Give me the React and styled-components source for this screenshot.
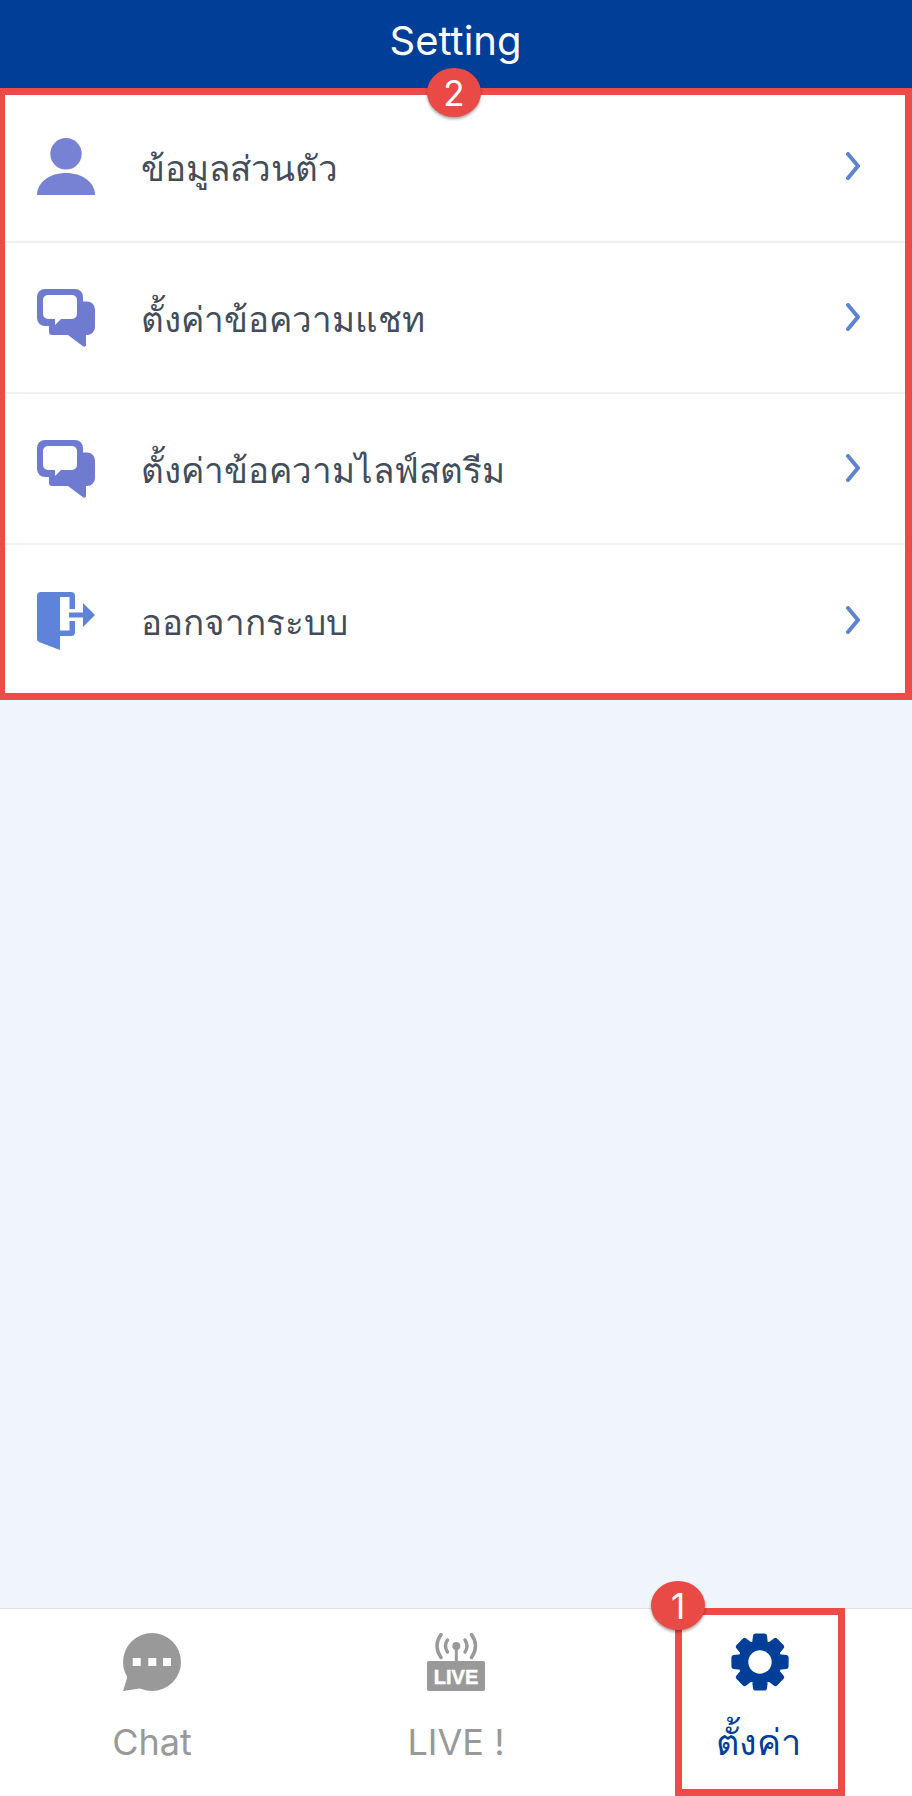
import React from "react";
import styled, { createGlobalStyle } from "styled-components";

const UI_FONT = `Inter, "Noto Sans", "Liberation Sans", "DejaVu Sans", sans-serif`;

const Global = createGlobalStyle`
  html, body { margin: 0; padding: 0; background: #f0f4fc; }
  * { box-sizing: border-box; }
`;

const Page = styled.div`
  position: relative;
  display: flex;
  flex-direction: column;
  width: 912px;
  height: 1796px;
  overflow: hidden;
  background: #f0f4fc;
  font-family: ${UI_FONT};
`;

const Header = styled.header`
  display: flex;
  justify-content: center;
  align-items: center;
  height: 88px;
  padding-bottom: 8px;
  padding-right: 1px;
  background: #003e98;
  color: #fff;
  font-size: 40px;
`;

const List = styled.div`
  padding-top: 4px;
  background: #fff;
`;

const Row = styled.div`
  display: flex;
  align-items: center;
  height: 151px;
  padding: 0 52px 0 37px;
  border-bottom: ${(p) => (p.$last ? "0" : "2px solid #f0f1f5")};
`;

const RowLabel = styled.span`
  flex: 1;
  margin-left: 46px;
  padding-top: 4px;
  color: #434d5a;
  font-size: 35px;
`;

const Chevron = styled.svg`
  margin-bottom: 2px;
`;

const Spacer = styled.div`
  flex: 1;
`;

const TabBar = styled.nav`
  display: grid;
  grid-template-columns: repeat(3, 1fr);
  height: 188px;
  padding-top: 24px;
  background: #fff;
  border-top: 1px solid #dfe0e4;
`;

const Tab = styled.div`
  display: flex;
  flex-direction: column;
  align-items: center;
  gap: 31px;
  color: ${(p) => (p.$active ? "#003e98" : "#999")};
  font-size: 36px;
  line-height: 40px;
`;

const TabLabel = styled.span`
  margin-right: ${(p) => (p.$active ? "3px" : "0")};
`;

const Frame = styled.div`
  position: absolute;
  border: 7px solid #ec4b47;
  pointer-events: none;
`;

const ListFrame = styled(Frame)`
  top: 88px;
  left: -2px;
  right: 0;
  height: 612px;
`;

const TabFrame = styled(Frame)`
  top: 1608px;
  left: 675px;
  width: 170px;
  height: 188px;
`;

const Badge = styled.div`
  position: absolute;
  top: ${(p) => p.$top}px;
  left: ${(p) => p.$left}px;
  width: 54px;
  height: 49px;
  display: flex;
  align-items: center;
  justify-content: center;
  border-radius: 50%;
  background: #ea4a45;
  box-shadow: 0 2px 3px rgba(0, 0, 0, 0.35);
  color: #fff;
  font-size: 35px;
`;

const Icon = ({ children, color = "#7782d5" }) => (
  <svg width="58" height="58" viewBox="0 0 58 58" fill={color}>
    {children}
  </svg>
);

const PersonIcon = () => (
  <Icon>
    <circle cx="29" cy="15.800" r="15.700" />
    <path d="M0 57C0 44 13 35 29 35S58 44 58 57Z" />
  </Icon>
);

const ChatPairIcon = () => (
  <Icon color="#6f7ad1">
    <path d="M40 12.500h10a8 8 0 0 1 8 8v17.500a8 8 0 0 1-8 8h-1v10a1.800 1.800 0 0 1-3 1.300L31 46H15a3 3 0 0 1-3-3V30Z" />
    <rect width="46" height="37" rx="8" />
    <path d="M14 37h9l-5 5Z" />
    <path fill="#fff" d="M11 6H35a5 5 0 0 1 5 5V25a5 5 0 0 1-5 5H24L18 36V30H11a5 5 0 0 1-5-5V11A5 5 0 0 1 11 6Z" />
  </Icon>
);

const LogoutIcon = () => (
  <Icon color="#5f83d9">
    <path d="M4 0H23V58L2 50Q0 49 0 47V4A4 4 0 0 1 4 0Z" />
    <path d="M23 0H34a4 4 0 0 1 4 4V17H32.500V5H23ZM32.500 29H38V40a4 4 0 0 1-4 4H23V38.500h9.500Z" />
    <path d="M32 20.500H46V11L58 23 46 35V25.500H32Z" />
  </Icon>
);

const ChevronIcon = () => (
  <Chevron width="14" height="28" viewBox="0 0 14 28" fill="none">
    <path d="M2 2L12 14L2 26" stroke="#5f83d0" strokeWidth="4" strokeLinecap="round" strokeLinejoin="round" />
  </Chevron>
);

const ChatIcon = () => (
  <Icon color="#999">
    <circle cx="29" cy="29" r="29" />
    <path d="M0 58L5 42 20 55Z" />
    <g fill="#fff">
      <rect x="9.700" y="25" width="8" height="8" />
      <rect x="25.300" y="25" width="8" height="8" />
      <rect x="40" y="25" width="8" height="8" />
    </g>
  </Icon>
);

const LiveIcon = () => (
  <Icon color="#999">
    <circle cx="29.300" cy="13" r="4" />
    <rect x="27.800" y="13" width="3" height="16" />
    <g fill="none" stroke="#999" strokeWidth="3.500" strokeLinecap="round">
      <path d="M14 1.500Q6 13 14 24.500" />
      <path d="M20.500 7Q16.500 13 20.500 19" />
      <path d="M44.500 1.500Q52.500 13 44.500 24.500" />
      <path d="M38 7Q42 13 38 19" />
    </g>
    <rect y="28" width="58" height="30" rx="2" />
    <text x="29" y="51" fill="#fff" stroke="#fff" strokeWidth="0.500" fontFamily="Liberation Sans, sans-serif" fontSize="20" fontWeight="700" textAnchor="middle">
      LIVE
    </text>
  </Icon>
);

// 8 tooth cog, worked out once instead of typing all the points
const cogPoints = (() => {
  const pts = [];
  for (let i = 0; i < 8; i++) {
    const a = (i * Math.PI) / 4 - Math.PI / 2;
    [
      [19.5, -0.28],
      [26.5, -0.17],
      [26.5, 0.17],
      [19.5, 0.28],
    ].forEach(([r, d]) => {
      pts.push(`${(29 + r * Math.cos(a + d)).toFixed(2)},${(29 + r * Math.sin(a + d)).toFixed(2)}`);
    });
  }
  return pts.join(" ");
})();

const CogIcon = () => (
  <Icon color="#003e98">
    <polygon points={cogPoints} stroke="#003e98" strokeWidth="5" strokeLinejoin="round" />
    <circle cx="29" cy="29" r="11.700" fill="#fff" />
  </Icon>
);

const rows = [
  { icon: <PersonIcon />, label: "ข้อมูลส่วนตัว" },
  { icon: <ChatPairIcon />, label: "ตั้งค่าข้อความแชท" },
  { icon: <ChatPairIcon />, label: "ตั้งค่าข้อความไลฟ์สตรีม" },
  { icon: <LogoutIcon />, label: "ออกจากระบบ" },
];

const App = () => (
  <Page>
    <Global />
    <Header>Setting</Header>
    <List>
      {rows.map((row, i) => (
        <Row key={row.label} $last={i === rows.length - 1}>
          {row.icon}
          <RowLabel>{row.label}</RowLabel>
          <ChevronIcon />
        </Row>
      ))}
    </List>
    <Spacer />
    <TabBar>
      <Tab>
        <ChatIcon />
        <TabLabel>Chat</TabLabel>
      </Tab>
      <Tab>
        <LiveIcon />
        <TabLabel>LIVE !</TabLabel>
      </Tab>
      <Tab $active>
        <CogIcon />
        <TabLabel $active>ตั้งค่า</TabLabel>
      </Tab>
    </TabBar>
    <ListFrame>
      <Badge $top={-27} $left={422}>2</Badge>
    </ListFrame>
    <TabFrame>
      <Badge $top={-34} $left={-31}>1</Badge>
    </TabFrame>
  </Page>
);

export default App;
